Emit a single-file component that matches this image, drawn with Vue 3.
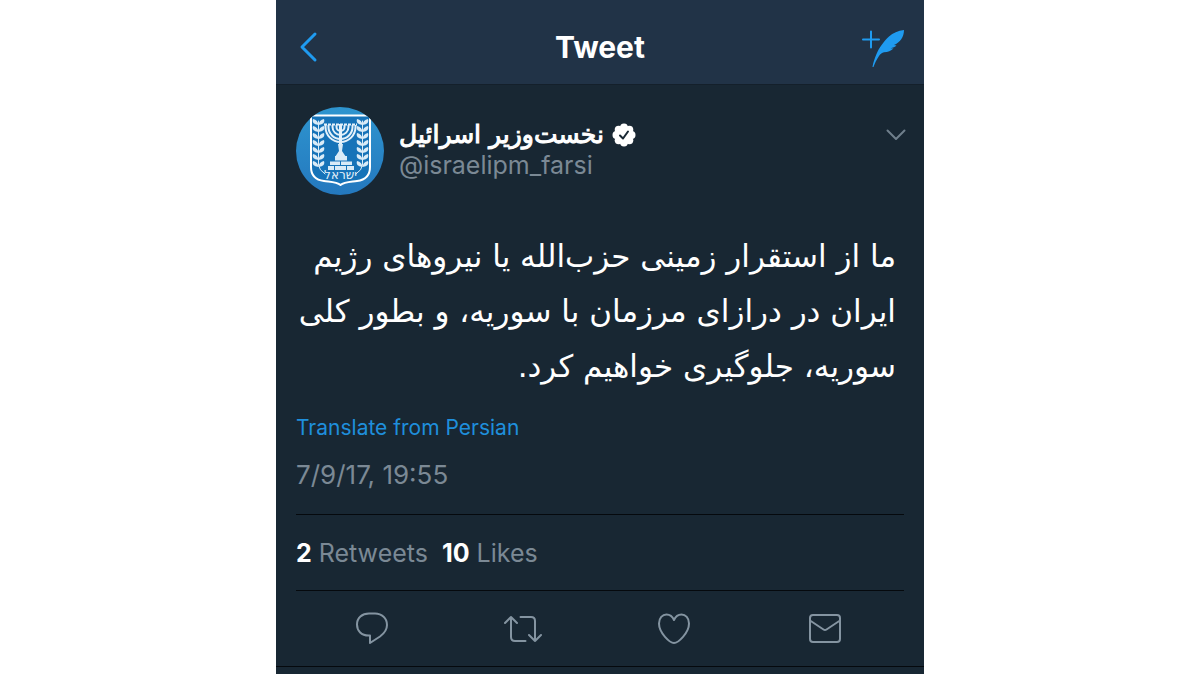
<template>
  <main class="screen">
    <header class="topbar">
      <button class="icon-button" type="button" aria-label="Back">
        <svg width="24" height="32" viewBox="0 0 24 32">
          <path class="back" d="M19 3 L6 16 L19 29" />
        </svg>
      </button>
      <h1>Tweet</h1>
      <button class="icon-button" type="button" aria-label="New tweet">
        <svg width="44" height="42" viewBox="0 0 44 42">
          <path class="plus" d="M3 13.500 H19 M11 5.500 V21.500" />
          <path
            class="feather"
            d="M44 4 C38 4.500 33 7 29 10.500 C24 15 19 22 16.500 28 C14.500 33 13 37 12.500 41 L13.500 41 C15 37 16.500 33.500 19 30 C20.500 28 22 26.500 24 26.300 C28 26 31 25 33.500 22.500 L30.500 22.200 C33 21.800 35 21 36.500 19.500 L34 19 C40 16.500 44 11 44 4 Z"
          />
        </svg>
      </button>
    </header>

    <article class="tweet">
      <div class="author">
        <svg class="avatar" viewBox="0 0 88 88" role="img" aria-label="Avatar">
          <defs>
            <linearGradient id="sky" x1="0" y1="0" x2="0" y2="1">
              <stop offset="0" stop-color="#2e95cf" />
              <stop offset="1" stop-color="#2478be" />
            </linearGradient>
            <clipPath id="round"><circle cx="44" cy="44" r="44" /></clipPath>
          </defs>
          <g clip-path="url(#round)">
            <rect width="88" height="88" fill="url(#sky)" />
            <path
              class="shield"
              d="M15 8.500 H74 V60 C74 69 69 73 61 74 C54 75 48 75 44.500 78 C41 75 35 75 28 74 C20 73 15 69 15 60 Z"
            />
            <g class="menorah">
              <path
                v-for="r in [4, 8, 12, 15]"
                :key="r"
                :d="`M${44.5 - r} 18 V20 A${r} ${r} 0 0 0 ${44.5 + r} 20 V18`"
              />
              <path class="stem" d="M44.500 17 V50" />
              <path d="M28 17.500 H61" stroke-dasharray="3 1" />
            </g>
            <path class="solid" d="M42 37 H47 L46 44 L50 50 H39 L43 44 Z" />
            <path class="solid" d="M39 49 H51 V53.500 H39 Z M34 54.500 H44 V58 H34 Z M45 54.500 H56 V58 H45 Z M32 59 H38 V63 H32 Z M39 59 H50 V63 H39 Z M51 59 H58 V63 H51 Z" />
            <g v-for="side in branches" :key="side" :transform="side">
              <path class="twig" d="M22.500 14 V58 Q23 63 29 67" />
              <path
                v-for="y in leaves"
                :key="y"
                class="solid"
                :d="`M22.5 ${y + 6} Q15 ${y + 5} 17 ${y} Q22 ${y + 1} 22.5 ${y + 6} Q30 ${y + 5} 28 ${y} Q23 ${y + 1} 22.5 ${y + 6}`"
              />
            </g>
            <text x="44.500" y="72" text-anchor="middle" class="state">ישראל</text>
          </g>
        </svg>
        <div class="names">
          <div class="name">
            <strong lang="fa" dir="rtl">نخست‌وزیر اسرائیل</strong>
            <svg class="badge" width="24" height="24" viewBox="0 0 24 24">
              <g fill="#fff">
                <circle cx="12" cy="12" r="9" />
                <circle
                  v-for="n in 8"
                  :key="n"
                  :cx="12 + 7.6 * Math.cos((n * Math.PI) / 4)"
                  :cy="12 + 7.6 * Math.sin((n * Math.PI) / 4)"
                  r="3.900"
                />
              </g>
              <path class="tick" d="M8 12.500 L11 15.500 L16 8.500" />
            </svg>
          </div>
          <a class="handle" href="#">@israelipm_farsi</a>
        </div>
        <button class="icon-button more" type="button" aria-label="More">
          <svg width="18" height="12" viewBox="0 0 18 12">
            <path d="M1.500 1.500 L10 10 L18.500 1.500" />
          </svg>
        </button>
      </div>

      <p class="body" lang="fa" dir="rtl">
        <span v-for="line in lines" :key="line">{{ line }}</span>
      </p>

      <a class="translate" href="#">Translate from Persian</a>
      <time class="date">7/9/17, 19:55</time>

      <div class="stats">
        <a v-for="s in stats" :key="s.label" href="#"><b>{{ s.count }}</b> {{ s.label }}</a>
      </div>

      <div class="actions">
        <button v-for="a in actions" :key="a.label" type="button" :aria-label="a.label">
          <svg width="40" height="36" viewBox="0 0 40 36">
            <path :d="a.path" />
          </svg>
        </button>
      </div>
    </article>
  </main>
</template>

<script setup>
const lines = [
  'ما از استقرار زمینی حزب‌الله یا نیروهای رژیم',
  'ایران در درازای مرزمان با سوریه، و بطور کلی',
  'سوریه، جلوگیری خواهیم کرد.',
];

const stats = [
  { count: 2, label: 'Retweets' },
  { count: 10, label: 'Likes' },
];

const leaves = [12, 19, 26, 33, 40, 47, 54];
const branches = ['', 'translate(89 0) scale(-1 1)'];

const actions = [
  {
    label: 'Reply',
    path: 'M17 3.500 H23 C30 3.500 35 8.500 35 15 C35 20 32 23.500 28 26.500 L18 33 V25.500 H16.500 C9.500 25.500 5 21 5 14.500 C5 8 10 3.500 17 3.500 Z',
  },
  {
    label: 'Retweet',
    path: 'M2 13 L8 7 L14 13 M8 7 V27 Q8 31 12 31 H22.500 M17.500 7 H28 Q32 7 32 11 V31 M26 25 L32 31 L38 25',
  },
  {
    label: 'Like',
    path: 'M20 33 C16 33 5 23 5 13.500 C5 8 8.500 4.500 12.500 4.500 C16 4.500 18.500 6.500 20 10 C21.500 6.500 24 4.500 27.500 4.500 C31.500 4.500 35 8 35 13.500 C35 23 24 33 20 33 Z',
  },
  {
    label: 'Message',
    path: 'M8 5 H32 Q35 5 35 8 V29 Q35 32 32 32 H8 Q5 32 5 29 V8 Q5 5 8 5 Z M5 10.500 L18.500 19.500 Q20 20.500 21.500 19.500 L35 10.500',
  },
];
</script>

<style>
body {
  background: #fff;
}
</style>

<style scoped>
.screen {
  box-sizing: border-box;
  width: 54%;
  min-height: 100vh;
  margin: 0 auto;
  background: #182733;
  color: #fff;
  font-family: Inter, 'Liberation Sans', sans-serif;
}

.topbar {
  display: flex;
  align-items: center;
  justify-content: space-between;
  height: 85px;
  padding: 10px 20px 0;
  box-sizing: border-box;
  border-bottom: 1px solid #14202b;
  background: #213347;
}

h1 {
  margin: 0;
  font-size: 30px;
  line-height: 36px;
  font-weight: 700;
}

.icon-button,
.actions button {
  display: flex;
  padding: 0;
  border: 0;
  background: none;
  cursor: pointer;
}

.topbar .icon-button {
  width: 48px;
}

.topbar .icon-button:last-child {
  justify-content: flex-end;
}

svg path {
  fill: none;
  stroke-linecap: round;
  stroke-linejoin: round;
}

svg .back,
svg .plus {
  stroke: #1f9bf0;
  stroke-width: 3;
}

svg .plus {
  stroke-width: 2;
}

svg .feather {
  fill: #1f9bf0;
}

.tweet {
  padding: 22px 20px 0;
}

.author {
  display: flex;
  align-items: flex-start;
  gap: 15px;
}

.avatar {
  flex: none;
  width: 88px;
  height: 88px;
}

svg .shield {
  fill: #1673b8;
  stroke: #fff;
  stroke-width: 2;
}

.menorah path {
  stroke: #e4f1fa;
  stroke-width: 2;
  stroke-linecap: butt;
}

.menorah .stem {
  stroke-width: 3;
}

svg .solid {
  fill: #d9ebf7;
}

svg .twig {
  stroke: #d9ebf7;
  stroke-width: 1;
}

.state {
  fill: #e4f1fa;
  font-family: 'DejaVu Sans', sans-serif;
  font-size: 12px;
}

.names {
  flex: 1;
  padding-top: 12px;
}

.name {
  display: flex;
  align-items: center;
  gap: 8px;
  height: 32px;
}

.name strong {
  font-family: 'DejaVu Sans', sans-serif;
  font-size: 25px;
  font-weight: 400;
  line-height: 32px;
  -webkit-text-stroke: 1px #fff;
}

svg .tick {
  stroke: #182733;
  stroke-width: 2;
}

.handle {
  display: block;
  color: #7b8995;
  font-size: 25px;
  line-height: 28px;
  text-decoration: none;
}

.more {
  padding-top: 22px;
}

.more svg {
  overflow: visible;
}

.more path {
  stroke: #6f7f8c;
  stroke-width: 2;
}

.body {
  margin: 34px 8px 0 0;
  font-family: 'DejaVu Sans', sans-serif;
  font-size: 31px;
  line-height: 55px;
}

.body span {
  display: block;
  white-space: nowrap;
}

.translate {
  display: block;
  margin-top: 20px;
  color: #1f8fdc;
  font-size: 21px;
  line-height: 28px;
  text-decoration: none;
}

.date {
  display: block;
  margin-top: 17px;
  color: #7b8995;
  font-size: 26px;
  line-height: 32px;
}

.stats {
  display: flex;
  gap: 14px;
  margin-top: 23px;
  padding: 22px 0 21px;
  border-top: 1px solid #05090d;
  border-bottom: 1px solid #05090d;
  font-size: 25px;
  line-height: 32px;
}

.stats a {
  color: #7b8995;
  text-decoration: none;
}

.stats b {
  color: #fff;
}

.actions {
  display: flex;
  justify-content: space-around;
  margin: 0 -20px;
  padding: 19px 24px 20px 21px;
  border-bottom: 1px solid #05090d;
}

.actions path {
  stroke: #8494a1;
  stroke-width: 2;
}
</style>
